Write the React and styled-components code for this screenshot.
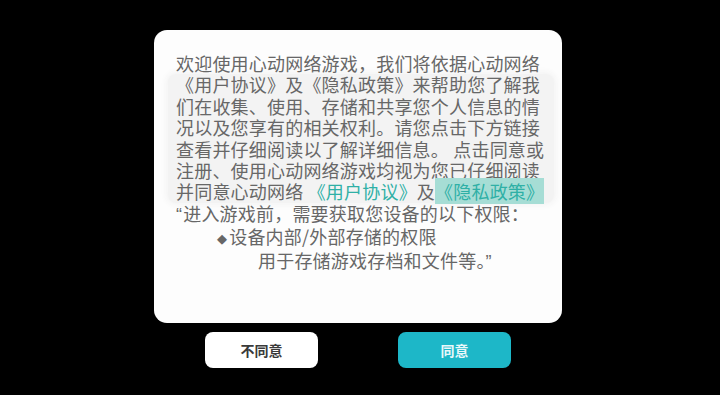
import React from 'react'
import styled, { createGlobalStyle } from 'styled-components'

const GlobalStyle = createGlobalStyle`
  html, body {
    margin: 0;
    padding: 0;
    background: #000;
  }
  body {
    font-family: "Noto Sans CJK SC", "Noto Sans", sans-serif;
  }
`

const Screen = styled.div`
  width: 720px;
  height: 395px;
  background: #000;
  display: flex;
  flex-direction: column;
  align-items: center;
  padding: 30px 4px 0 0;
  box-sizing: border-box;
`

const Dialog = styled.div`
  width: 408px;
  height: 293px;
  box-sizing: border-box;
  background: #fdfdfd;
  border-radius: 13px;
  padding: 23px 18px 0 22px;
`

const Text = styled.div`
  font-size: 18px;
  line-height: 21.4px;
  letter-spacing: 0.2px;
  color: #676767;
  white-space: nowrap;
`

const Shade = styled.div`
  margin: 0 -10px 0 -8px;
  padding: 0 10px 0 8px;
  background: #f3f3f3;
  border-radius: 8px;
  box-shadow: 0 0 6px 2px #f3f3f3;
`

const Line = styled.div`
  padding-left: ${(p) => p.indent || 0}px;
`

const Quote = styled.span`
  font-family: "Liberation Sans", sans-serif;
  margin-right: 1px;
`

const Bullet = styled.span`
  font-family: "DejaVu Sans", sans-serif;
  font-size: 13px;
  margin-right: 2px;
  vertical-align: 1px;
`

const Link = styled.span`
  color: #2fb0a6;
  background: ${(p) => (p.marked ? '#a6ddd5' : 'transparent')};
`

const Buttons = styled.div`
  display: flex;
  gap: 80px;
  margin-top: 9px;
`

const Button = styled.div`
  width: 113px;
  height: 36px;
  border-radius: 8px;
  display: flex;
  align-items: center;
  justify-content: center;
  font-size: 14px;
  font-weight: bold;
  background: ${(p) => (p.primary ? '#1db7c8' : '#fff')};
  color: ${(p) => (p.primary ? '#e8f8fa' : '#3a3a3a')};
`

const shaded = [
  '《用户协议》及《隐私政策》来帮助您了解我',
  '们在收集、使用、存储和共享您个人信息的情',
  '况以及您享有的相关权利。请您点击下方链接',
  '查看并仔细阅读以了解详细信息。 点击同意或',
  '注册、使用心动网络游戏均视为您已仔细阅读',
]

export default function App() {
  return (
    <>
      <GlobalStyle />
      <Screen>
        <Dialog>
          <Text>
            <Line>欢迎使用心动网络游戏，我们将依据心动网络</Line>
            <Shade>
              {shaded.map((t) => (
                <Line key={t}>{t}</Line>
              ))}
              <Line>
                并同意心动网络 <Link>《用户协议》</Link>及<Link marked>《隐私政策》</Link>
              </Line>
            </Shade>
            <Line>
              <Quote>“</Quote>进入游戏前，需要获取您设备的以下权限：
            </Line>
            <Line indent={41}>
              <Bullet>◆</Bullet>设备内部/外部存储的权限
            </Line>
            <Line indent={82}>
              用于存储游戏存档和文件等。<Quote>”</Quote>
            </Line>
          </Text>
        </Dialog>
        <Buttons>
          <Button>不同意</Button>
          <Button primary>同意</Button>
        </Buttons>
      </Screen>
    </>
  )
}
